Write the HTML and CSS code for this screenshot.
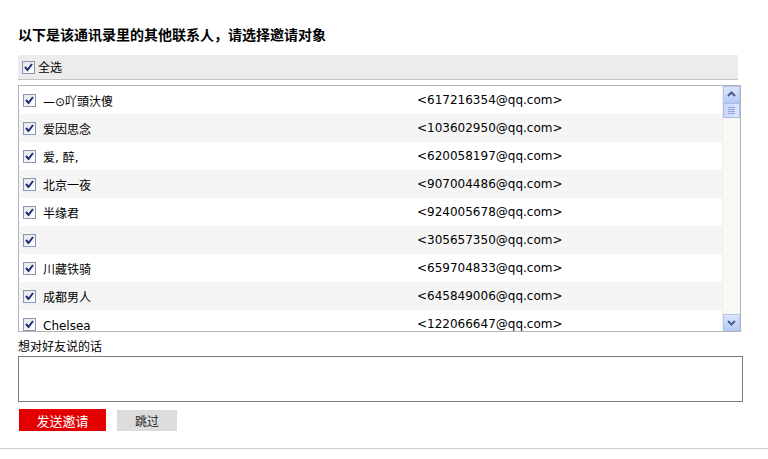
FILE: index.html
```html
<!DOCTYPE html>
<html lang="zh-CN">
<head>
<meta charset="utf-8">
<title>邀请联系人</title>
<link rel="stylesheet" href="styles.css">
</head>
<body>
<div class="page">
  <h1 class="title">以下是该通讯录里的其他联系人，请选择邀请对象</h1>
  <div class="header">
    <span class="cb"><svg viewBox="0 0 11 11"><polyline points="2,5 4.5,8 9,2"/></svg></span>
    <span class="all">全选</span>
  </div>
  <div class="listbox">
    <div class="rows">
      <div class="row"><span class="cb"><svg viewBox="0 0 11 11"><polyline points="2,5 4.5,8 9,2"/></svg></span><span class="name">—⊙吖頭汏傻</span><span class="mail">&lt;617216354@qq.com&gt;</span></div>
      <div class="row alt"><span class="cb"><svg viewBox="0 0 11 11"><polyline points="2,5 4.5,8 9,2"/></svg></span><span class="name">爱因思念</span><span class="mail">&lt;103602950@qq.com&gt;</span></div>
      <div class="row"><span class="cb"><svg viewBox="0 0 11 11"><polyline points="2,5 4.5,8 9,2"/></svg></span><span class="name">爱, 醉,</span><span class="mail">&lt;620058197@qq.com&gt;</span></div>
      <div class="row alt"><span class="cb"><svg viewBox="0 0 11 11"><polyline points="2,5 4.5,8 9,2"/></svg></span><span class="name">北京一夜</span><span class="mail">&lt;907004486@qq.com&gt;</span></div>
      <div class="row"><span class="cb"><svg viewBox="0 0 11 11"><polyline points="2,5 4.5,8 9,2"/></svg></span><span class="name">半缘君</span><span class="mail">&lt;924005678@qq.com&gt;</span></div>
      <div class="row alt"><span class="cb"><svg viewBox="0 0 11 11"><polyline points="2,5 4.5,8 9,2"/></svg></span><span class="name"></span><span class="mail">&lt;305657350@qq.com&gt;</span></div>
      <div class="row"><span class="cb"><svg viewBox="0 0 11 11"><polyline points="2,5 4.5,8 9,2"/></svg></span><span class="name">川藏铁骑</span><span class="mail">&lt;659704833@qq.com&gt;</span></div>
      <div class="row alt"><span class="cb"><svg viewBox="0 0 11 11"><polyline points="2,5 4.5,8 9,2"/></svg></span><span class="name">成都男人</span><span class="mail">&lt;645849006@qq.com&gt;</span></div>
      <div class="row"><span class="cb"><svg viewBox="0 0 11 11"><polyline points="2,5 4.5,8 9,2"/></svg></span><span class="name">Chelsea</span><span class="mail">&lt;122066647@qq.com&gt;</span></div>
    </div>
    <div class="scrollbar">
      <div class="sbtn"><svg viewBox="0 0 15 15"><polyline points="4,9 7.5,5.5 11,9"/></svg></div>
      <div class="thumb"><svg viewBox="0 0 15 13"><path d="M4 3.5h7M4 5.5h7M4 7.5h7M4 9.5h7"/></svg></div>
      <div class="track"></div>
      <div class="sbtn"><svg viewBox="0 0 15 15"><polyline points="4,6 7.5,9.5 11,6"/></svg></div>
    </div>
  </div>
  <div class="msg-label">想对好友说的话</div>
  <div class="msg"></div>
  <div class="actions">
    <span class="btn send">发送邀请</span>
    <span class="btn skip">跳过</span>
  </div>
</div>
<div class="rule"></div>
</body>
</html>
```
FILE: styles.css
```css
html, body {
  margin: 0;
  padding: 0;
  background: #fff;
}
body {
  font-family: "DejaVu Sans", "Noto Sans CJK SC", sans-serif;
  font-size: 12px;
  color: #000;
}
.page {
  padding: 26px 0 0 18px;
}
.title {
  margin: 0;
  font-family: "Noto Sans CJK SC", sans-serif;
  font-size: 14px;
  font-weight: bold;
  line-height: 16px;
  height: 16px;
}
.header {
  margin-top: 13px;
  width: 716px;
  height: 24px;
  padding-left: 4px;
  background: #ececec;
  border-bottom: 1px solid #c4c4c4;
  display: flex;
  align-items: center;
}
.all {
  margin-left: 3px;
  font-family: "Noto Sans CJK SC", sans-serif;
  line-height: 16px;
}
.cb {
  width: 11px;
  height: 11px;
  border: 1px solid #8796b0;
  background: linear-gradient(135deg, #e6e6e6, #ffffff);
  display: inline-flex;
  box-sizing: content-box;
}
.cb svg {
  width: 11px;
  height: 11px;
}
.cb polyline {
  fill: none;
  stroke: #1d2b78;
  stroke-width: 2;
}
.listbox {
  margin-top: 5px;
  width: 721px;
  height: 245px;
  border: 1px solid #b4b4b4;
  display: flex;
}
.rows {
  flex: 1;
  overflow: hidden;
}
.row {
  height: 28px;
  display: grid;
  grid-template-columns: 20px 374px 1fr;
  align-items: center;
  padding-left: 4px;
}
.row.alt {
  background: #f5f5f5;
}
.row .cb {
  margin-top: 1px;
}
.name {
  font-family: "DejaVu Sans", "Noto Sans CJK SC", sans-serif;
  line-height: 16px;
  height: 16px;
  white-space: nowrap;
  margin-top: 3px;
}
.mail {
  line-height: 16px;
  white-space: nowrap;
}
.scrollbar {
  width: 17px;
  display: flex;
  flex-direction: column;
  background: #f9f8f3;
  border-left: 1px solid #eeede6;
}
.sbtn {
  height: 15px;
  border: 1px solid #b5c6ee;
  background: linear-gradient(#dbe5fc, #b7cbf8);
  display: flex;
}
.sbtn svg {
  width: 15px;
  height: 15px;
}
.sbtn polyline {
  fill: none;
  stroke: #4a5e8c;
  stroke-width: 2;
}
.thumb {
  height: 13px;
  border: 1px solid #a9bde9;
  background: linear-gradient(90deg, #c8d6fb, #dbe5fd);
  display: flex;
}
.thumb svg {
  width: 15px;
  height: 13px;
}
.thumb path {
  stroke: #8ea3d6;
  stroke-width: 1;
}
.track {
  flex: 1;
}
.msg-label {
  margin-top: 6px;
  font-family: "Noto Sans CJK SC", sans-serif;
  line-height: 16px;
  height: 16px;
}
.msg {
  margin-top: 2px;
  width: 723px;
  height: 44px;
  border: 1px solid #7a7a7a;
}
.actions {
  margin-top: 7px;
  display: flex;
  align-items: flex-start;
}
.btn {
  display: flex;
  align-items: center;
  justify-content: center;
  font-family: "Noto Sans CJK SC", sans-serif;
}
.send {
  margin-left: 1px;
  width: 87px;
  height: 22px;
  background: #e30000;
  color: #fff;
  font-size: 13px;
}
.skip {
  margin-left: 11px;
  margin-top: 1px;
  width: 60px;
  height: 21px;
  background: #dcdcdc;
  color: #222;
  font-size: 12px;
}
.rule {
  margin-top: 17px;
  height: 1px;
  background: #cfcfcf;
}
```
